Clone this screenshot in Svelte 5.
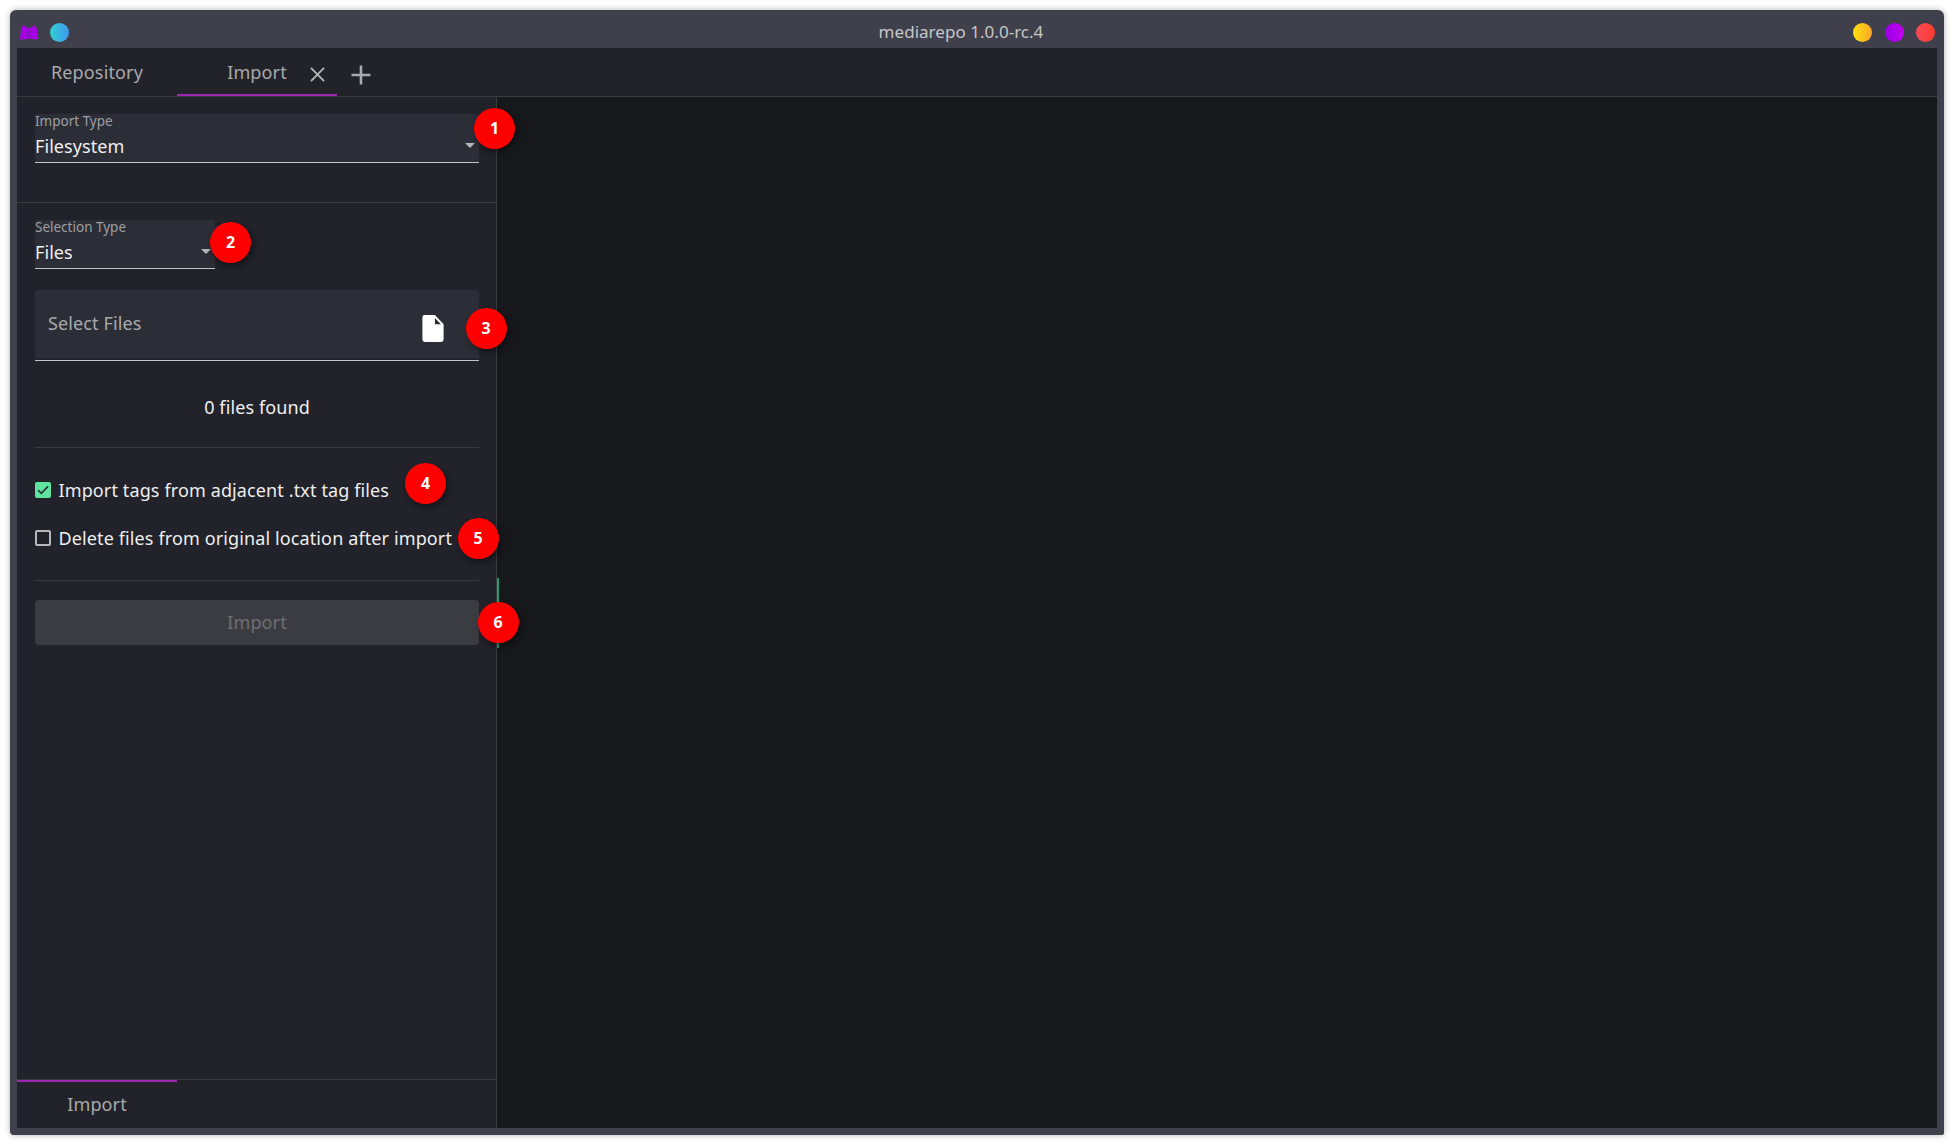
<script>
  const options = [
    { label: 'Import tags from adjacent .txt tag files', checked: true, badge: 4 },
    { label: 'Delete files from original location after import', checked: false, badge: 5 }
  ];
</script>

<div class="window">
  <header class="titlebar">
    <div class="left">
      <svg class="logo" viewBox="0 0 18 16" aria-hidden="true">
        <path d="M0 15.5 C0.4 10 0.8 4 2.4 0.4 C5 0.8 7.6 2.6 9 3.8 C10.4 2.6 13 0.8 15.6 0.4 C17.2 4 17.6 10 18 15.5 L15.4 13.4 L13.8 15 C13.4 14 11.8 13.4 9 13.4 C6.2 13.4 4.6 14 4.2 15 L2.6 13.4 Z" fill="#a800e6" />
        <circle cx="9" cy="8.8" r="2.5" fill="none" stroke="#6a1f9e" stroke-width="0.8" />
        <circle cx="9" cy="8.8" r="0.8" fill="#6a1f9e" />
      </svg>
      <span class="dot blue"></span>
    </div>
    <div class="title">mediarepo 1.0.0-rc.4</div>
    <div class="right">
      <span class="dot yellow"></span>
      <span class="dot purple"></span>
      <span class="dot red"></span>
    </div>
  </header>

  <div class="content">
    <nav class="tabs">
      <div class="tab">Repository</div>
      <div class="tab active">
        <span>Import</span>
        <svg class="close" viewBox="0 0 16 16" aria-hidden="true"><path d="M1 1 L15 15 M15 1 L1 15" /></svg>
      </div>
      <svg class="plus" viewBox="0 0 20 20" aria-hidden="true"><path d="M10 0.5 V19.5 M0.5 10 H19.5" /></svg>
    </nav>

    <div class="main">
      <aside class="sidebar">
        <div class="body">
          <section class="type-section">
            <div class="select wide">
              <span class="label">Import Type</span>
              <span class="value">Filesystem</span>
              <span class="caret"></span>
              <span class="badge b1">1</span>
            </div>
          </section>

          <section class="form-section">
            <div class="select narrow">
              <span class="label">Selection Type</span>
              <span class="value">Files</span>
              <span class="caret"></span>
              <span class="badge b2">2</span>
            </div>

            <div class="file-field">
              <span class="placeholder">Select Files</span>
              <svg class="file" viewBox="0 0 22 28" aria-hidden="true">
                <path d="M2.5 0 H13 L22 9.5 V25.5 A2.5 2.5 0 0 1 19.5 28 H2.5 A2.5 2.5 0 0 1 0 25.5 V2.5 A2.5 2.5 0 0 1 2.5 0 Z M13 3 V9.5 H19.3 Z" fill="#fff" fill-rule="evenodd" />
              </svg>
              <span class="badge b3">3</span>
            </div>

            <div class="found">0 files found</div>

            <div class="options">
              {#each options as o}
                <label class="option">
                  <span class="box" class:on={o.checked}>
                    {#if o.checked}
                      <svg viewBox="0 0 16 16" aria-hidden="true"><path d="M3 8.2 L6.4 11.4 L13 4.4" /></svg>
                    {/if}
                  </span>
                  <span class="opt-text">{o.label}</span>
                  <span class="badge b{o.badge}">{o.badge}</span>
                </label>
              {/each}
            </div>

            <div class="actions">
              <button class="import" disabled>Import</button>
              <span class="badge b6">6</span>
            </div>
          </section>
        </div>

        <footer class="side-tabs">
          <div class="side-tab">Import</div>
        </footer>

        <span class="resizer"></span>
      </aside>
      <div class="stage"></div>
    </div>
  </div>
</div>

<style>
  :global(body) {
    margin: 0;
    background: #fff;
    font-family: "Noto Sans", sans-serif;
  }
  .window {
    box-sizing: border-box;
    margin: 10px;
    width: 1934px;
    height: 1125px;
    display: flex;
    flex-direction: column;
    padding: 0 7px 7px;
    background: #3f404c;
    border-radius: 6px 6px 2px 4px;
    box-shadow: 0 0 6px rgba(0, 0, 0, 0.3);
  }
  .titlebar {
    box-sizing: border-box;
    height: 38px;
    flex: none;
    display: flex;
    align-items: center;
    padding-top: 6px;
  }
  .left {
    display: flex;
    align-items: center;
    width: 52px;
  }
  .logo {
    width: 18px;
    height: 16px;
    margin: 1px 0 0 3px;
  }
  .dot {
    width: 19px;
    height: 19px;
    border-radius: 50%;
    display: block;
  }
  .blue {
    margin-left: 12px;
    background: linear-gradient(90deg, #33cfd4, #3f97ee);
  }
  .yellow { background: linear-gradient(90deg, #fce20a, #fba52c); }
  .purple { background: linear-gradient(90deg, #9a00e8, #c400ee); }
  .red { background: linear-gradient(90deg, #f74a55, #ff3a30); }
  .title {
    flex: 1;
    text-align: center;
    color: #c6c6c8;
    font-size: 17px;
    letter-spacing: 0.03px;
    line-height: 22px;
  }
  .right {
    display: flex;
    gap: 12.5px;
    padding-right: 2px;
  }
  .content {
    flex: 1;
    min-height: 0;
    display: flex;
    flex-direction: column;
    background: #17181c;
  }
  .tabs {
    box-sizing: border-box;
    height: 49px;
    flex: none;
    display: flex;
    align-items: stretch;
    background: #21222a;
    border-bottom: 1px solid #3a3b3f;
  }
  .tab {
    box-sizing: border-box;
    width: 160px;
    display: flex;
    align-items: center;
    justify-content: center;
    color: #a9aaac;
    font-size: 18px;
    letter-spacing: 0.15px;
    position: relative;
  }
  .active {
    border-bottom: 2px solid #9c27b0;
    padding-top: 2px;
  }
  .close {
    position: absolute;
    left: 133px;
    top: 18.5px;
    width: 15px;
    height: 15px;
  }
  .close path {
    fill: none;
    stroke: #b5b5b7;
    stroke-width: 2;
  }
  .plus {
    width: 20px;
    height: 20px;
    margin: 17px 0 0 14px;
  }
  .plus path {
    fill: none;
    stroke: #a9aaac;
    stroke-width: 2.6;
  }
  .main {
    flex: 1;
    min-height: 0;
    display: flex;
  }
  .sidebar {
    box-sizing: border-box;
    width: 480px;
    flex: none;
    display: flex;
    flex-direction: column;
    background: #21222a;
    border-right: 1px solid #3a3b3f;
    position: relative;
  }
  .body {
    flex: 1;
    min-height: 0;
  }
  .type-section {
    box-sizing: border-box;
    height: 106px;
    padding: 17px 18px 0;
    border-bottom: 1px solid #3a3b3f;
  }
  .form-section {
    padding: 17px 18px 0;
  }
  .select {
    box-sizing: border-box;
    height: 49px;
    position: relative;
    background: #2c2e37;
    border-bottom: 1px solid #c4c4c6;
    border-radius: 4px 4px 0 0;
  }
  .wide { width: 444px; }
  .narrow { width: 180px; }
  .label {
    position: absolute;
    left: 0;
    top: -1px;
    color: #9e9fa3;
    font-size: 13.5px;
    line-height: 16px;
  }
  .value {
    position: absolute;
    left: 0;
    top: 19.5px;
    color: #f0f0f1;
    font-size: 18px;
    letter-spacing: 0.08px;
    line-height: 24px;
  }
  .caret {
    position: absolute;
    right: 4px;
    top: 29px;
    width: 0;
    height: 0;
    border-left: 5px solid transparent;
    border-right: 5px solid transparent;
    border-top: 5px solid #b6b6b9;
  }
  .file-field {
    box-sizing: border-box;
    width: 444px;
    height: 71px;
    margin-top: 21px;
    position: relative;
    background: #2c2e37;
    border-radius: 4px 4px 0 0;
    border-bottom: 1px solid #c4c4c6;
    box-shadow: inset 0 -2px 0 #21222a;
  }
  .placeholder {
    position: absolute;
    left: 13px;
    top: 21px;
    font-size: 18px;
    letter-spacing: 0.12px;
    line-height: 24px;
    color: #a9aaac;
  }
  .file {
    position: absolute;
    left: 387px;
    top: 24.5px;
    width: 22px;
    height: 27px;
  }
  .found {
    box-sizing: border-box;
    width: 444px;
    height: 87px;
    padding-top: 34px;
    text-align: center;
    color: #f0f0f1;
    font-size: 18px;
    letter-spacing: 0.1px;
    line-height: 24px;
    border-bottom: 1px solid #3a3b3f;
  }
  .options {
    box-sizing: border-box;
    width: 444px;
    height: 133px;
    padding-top: 30px;
    border-bottom: 1px solid #3a3b3f;
    display: flex;
    flex-direction: column;
    gap: 24px;
  }
  .option {
    display: flex;
    align-items: center;
    gap: 7.5px;
    height: 24px;
    color: #eeeeef;
    font-size: 18px;
    letter-spacing: 0.12px;
    line-height: 24px;
    white-space: nowrap;
    position: relative;
  }
  .box {
    box-sizing: border-box;
    width: 16px;
    height: 16px;
    flex: none;
    border: 2px solid #b8b8ba;
    border-radius: 2px;
  }
  .box.on {
    border: none;
    background: #5fe3a1;
  }
  .box svg {
    display: block;
    width: 16px;
    height: 16px;
  }
  .box path {
    fill: none;
    stroke: #2b3b35;
    stroke-width: 1.7;
  }
  .actions {
    margin-top: 19px;
    position: relative;
    width: 444px;
  }
  .import {
    display: block;
    width: 444px;
    height: 45px;
    border: none;
    border-radius: 4px;
    background: #3b3c42;
    color: #6e6f74;
    font: 18px/24px "Noto Sans", sans-serif;
    letter-spacing: 0.12px;
    padding: 0 0 2px;
  }
  .side-tabs {
    box-sizing: border-box;
    height: 49px;
    flex: none;
    border-top: 1px solid #3a3b3f;
  }
  .side-tab {
    box-sizing: border-box;
    width: 160px;
    height: 48px;
    border-top: 2px solid #9c27b0;
    display: flex;
    align-items: center;
    justify-content: center;
    color: #a9aaac;
    font-size: 18px;
    letter-spacing: 0.12px;
    padding-bottom: 2px;
  }
  .resizer {
    position: absolute;
    left: 480px;
    top: 481px;
    width: 2px;
    height: 70px;
    background: #1f9d6b;
  }
  .stage {
    flex: 1;
  }
  .badge {
    position: absolute;
    box-sizing: border-box;
    width: 41px;
    height: 41px;
    border-radius: 50%;
    background: #f00;
    color: #fff;
    font-size: 16px;
    font-weight: 700;
    letter-spacing: 0;
    line-height: 41px;
    text-align: center;
    box-shadow: 2px 3px 6px rgba(0, 0, 0, 0.45);
    z-index: 2;
  }
  .b1 { left: 439px; top: -6px; }
  .b2 { left: 175px; top: 2px; }
  .b3 { left: 430.5px; top: 17.5px; }
  .b4 { left: 370px; top: -15.5px; }
  .b5 { left: 422.5px; top: -8.5px; }
  .b6 { left: 442.5px; top: 1.5px; }
</style>
